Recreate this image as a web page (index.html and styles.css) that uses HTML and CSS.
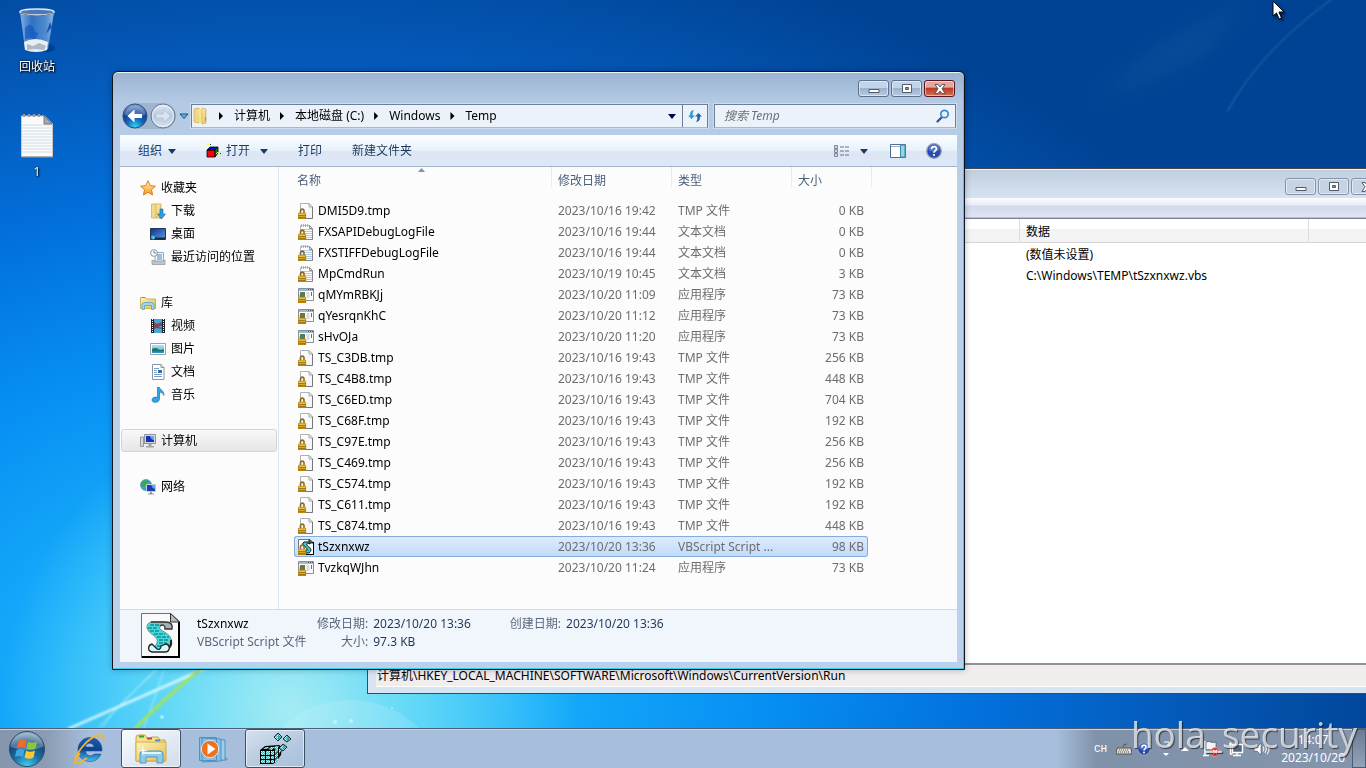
FILE: index.html
```html
<!DOCTYPE html>
<html lang="zh-CN">
<head>
<meta charset="utf-8">
<title>Temp</title>
<link rel="stylesheet" href="styles.css">
</head>
<body>
<svg class="defs" aria-hidden="true">
  <defs>
    <linearGradient id="g-fold" x1="0" y1="0" x2="1" y2="1"><stop offset="0" stop-color="#fdf3b8"/><stop offset="1" stop-color="#e3bd55"/></linearGradient>
    <linearGradient id="g-lock" x1="0" y1="0" x2="0" y2="1"><stop offset="0" stop-color="#f3cf52"/><stop offset="1" stop-color="#c08c0c"/></linearGradient>
    <linearGradient id="g-page" x1="0" y1="0" x2="1" y2="1"><stop offset="0" stop-color="#ffffff"/><stop offset="1" stop-color="#f0f2f4"/></linearGradient>
    <linearGradient id="g-blue" x1="0" y1="0" x2="1" y2="1"><stop offset="0" stop-color="#0c2f8c"/><stop offset="1" stop-color="#5aa0ea"/></linearGradient>
    <linearGradient id="g-sky" x1="0" y1="0" x2="0" y2="1"><stop offset="0" stop-color="#b9e2f8"/><stop offset="1" stop-color="#3d9cd8"/></linearGradient>
    <radialGradient id="g-back" cx=".5" cy=".95" r=".9"><stop offset="0" stop-color="#35d5f6"/><stop offset=".4" stop-color="#1566b8"/><stop offset=".7" stop-color="#123f94"/><stop offset="1" stop-color="#7c9fd4"/></radialGradient>
    <linearGradient id="g-fwd" x1="0" y1="0" x2="0" y2="1"><stop offset="0" stop-color="#dfe8f3"/><stop offset=".5" stop-color="#b6c8de"/><stop offset="1" stop-color="#d6e3f2"/></linearGradient>
    <radialGradient id="g-orb" cx=".5" cy="1" r="1"><stop offset="0" stop-color="#3fd3f5"/><stop offset=".4" stop-color="#1b6fa5"/><stop offset=".7" stop-color="#174a78"/><stop offset="1" stop-color="#9ab9d2"/></radialGradient>
    <linearGradient id="g-ie" x1="0" y1="0" x2="0" y2="1"><stop offset="0" stop-color="#1d5fb2"/><stop offset=".5" stop-color="#0d4391"/><stop offset="1" stop-color="#45c2f2"/></linearGradient>
    <linearGradient id="g-star" x1="0" y1="0" x2="0" y2="1"><stop offset="0" stop-color="#fff3a8"/><stop offset="1" stop-color="#f59a1c"/></linearGradient>
    <linearGradient id="g-bin" x1="0" y1="0" x2="1" y2="0"><stop offset="0" stop-color="#b6d3f0" stop-opacity=".75"/><stop offset=".35" stop-color="#4d8bd6" stop-opacity=".6"/><stop offset=".75" stop-color="#79aae2" stop-opacity=".65"/><stop offset="1" stop-color="#c4dcf5" stop-opacity=".75"/></linearGradient>
    <pattern id="p-dots" width="2" height="2" patternUnits="userSpaceOnUse"><rect width="2" height="2" fill="#16c3c6"/><rect width="1" height="1" fill="#d8ffff"/><rect x="1" y="1" width="1" height="1" fill="#8eeeee"/></pattern>
  </defs>
  <symbol id="lock" viewBox="0 0 16 16">
    <path d="M2.500 10V7.500a1.800 1.800 0 0 1 3.500 0V10" fill="none" stroke="#8c6a1c" stroke-width="1.600"/>
    <path d="M0 10h8v6H0z" fill="url(#g-lock)"/><path d="M0 12.500h8M0 14.500h8" stroke="#9a6c08" stroke-width=".8"/><path d="M.3 10.300h7.400v5.400H.3z" fill="none" stroke="#a87808" stroke-width=".6"/>
  </symbol>
  <symbol id="f-tmp" viewBox="0 0 16 16">
    <path d="M2.500 .5h8.500l3.500 3.500v11.500h-12z" fill="url(#g-page)" stroke="#b0b0b0"/><path d="M11 .5V4h3.500z" fill="#fff" stroke="#a6a6a6"/><path d="M14.500 4v11.500H8" fill="none" stroke="#777"/><use href="#lock"/>
  </symbol>
  <symbol id="f-txt" viewBox="0 0 16 16">
    <path d="M2.500 1.500h9l3 3v11h-12z" fill="#fff" stroke="#b6bcc2"/><path d="M3 5.500h11M3 7.500h11M3 9.500h11M3 11.500h11M3 13.500h11" stroke="#b3cbe2"/><path d="M3.500 0v3M5.500 0v3M7.500 0v3M9.500 0v3" stroke="#a3a3a3" stroke-width=".8"/><path d="M11.500 1.500v3h3z" fill="#eee" stroke="#8e8e8e"/><path d="M14.500 5v10.500H8" fill="none" stroke="#858585"/><use href="#lock"/>
  </symbol>
  <symbol id="f-exe" viewBox="0 0 16 16">
    <path d="M.5 1.500h15v12H.5z" fill="#fdfdfd" stroke="#84919d"/><path d="M1 2h14v2H1z" fill="#a9b6c3"/><path d="M10 2.500h1M12 2.500h1M14 2.500h1" stroke="#4a5663"/><path d="M2 5h5v5H2z" fill="#2f8b91"/><path d="M8.500 6h3M8.500 8h3M8.500 10h3" stroke="#b5bac0"/><path d="M13.500 5v4" stroke="#3c8a68"/><use href="#lock"/>
  </symbol>
  <symbol id="scroll" viewBox="0 0 39 45">
    <path d="M.5 .5h29l9 8v36H.5z" fill="#fafafa" stroke="#6f6f6f"/><path d="M38 9v35H1" fill="none" stroke="#000" stroke-width="2"/><path d="M29.500 .5v8.500h9z" fill="#b9b9b9" stroke="#333"/>
    <path d="M10 9c-4 1-5 5-3 8 2 4 8 6 9 9 1 4-1 7-5 9l-2 3h14c5-2 8-7 7-12-1-5-8-7-11-10-1-3 1-5 4-7z" fill="#48dada" stroke="#5b8f92"/>
    <path d="M10 9h15c5 0 7 3 6 7h-7c0-4-2-5-5-3" fill="#a3b1b1" stroke="#333" stroke-width="1.300"/><path d="M9 12h9M7 15h9M9 18h9M13 21h11M16 24h12M18 27h9M18 30h8M16 33h8" stroke="#0a9397" stroke-width="1.300" stroke-dasharray="4 1"/><path d="M30 27c1 5-2 9-6 11" fill="none" stroke="#222" stroke-width="2"/><path d="M11 31c-4 1-5 7 0 8h13c5 0 6-7 1-8l-5 2c0 3-2 4-4 3z" fill="#d9fafa" stroke="#222" stroke-width="1.300"/>
  </symbol>
  <symbol id="f-vbs" viewBox="0 0 16 16">
    <path d="M.5 .5h11l4 3v12H.5z" fill="#fff" stroke="#777"/><path d="M15.500 3v12.500H7" fill="none" stroke="#000"/><path d="M11 .5V4h4z" fill="#999" stroke="#222"/><path d="M6 3C2 6 9 8 9 10s-2 3-2 4h4c3-2 2-5 0-6S8 5 10 4l2 1V3z" fill="#35cfd0" stroke="#111"/><path d="M5 5l6 7M4 4l4 5" stroke="#0c8086" stroke-dasharray="1 1"/><use href="#lock"/>
  </symbol>
  <symbol id="cube" viewBox="0 0 32 32">
    <path d="M1 17l5-4 14-1 3 2-1 8-5 7-3 2H1z" fill="#000"/>
    <path d="M2 18h4v4H2zM7 18h4v4H7zM2 23h4v3H2zM7 23h4v3H7zM12 23h3v3h-3zM2 27h4v3H2zM7 27h4v3H7zM12 27h3v3h-3zM12 18h3v4h-3zM16 22l3-3v4l-3 3zM16 27l3-3v3l-3 3zM16 17l3-3v4l-3 3zM4 16l3-2h3l-2 2zM9 16l3-2h3l-2 3zM14 15l3-2h3l-3 3zM20 16l2-2v4l-2 3z" fill="url(#p-dots)"/>
    <path d="M19 0l4 4-4 4-4-4zM28 2l4 4-4 3-4-3zM24 11l4 3-4 4-4-3z" fill="url(#p-dots)" stroke="#000" stroke-width=".8"/><path d="M19 1v6l3-3zM28 3v5l3-2zM24 12v5l3-3z" fill="#078488" opacity=".55"/>
  </symbol>
  <symbol id="q" viewBox="0 0 16 16"><circle cx="8" cy="8" r="7.300" fill="#254cb2" stroke="#9a9fab" stroke-width="1.300"/><path d="M2.500 7a5.500 5.500 0 0 1 11 0c-3 2-8 2-11 0z" fill="#7191db" opacity=".6"/><path d="M5.500 6.200c0-3.500 5-3.300 5-.4C10.500 7.500 8 7.600 8 9.700" fill="none" stroke="#fff" stroke-width="1.700"/><circle cx="8" cy="12" r="1.100" fill="#fff"/></symbol>
  <symbol id="down" viewBox="0 0 8 5"><path d="M0 0h8L4 5z"/></symbol>
  <symbol id="w-min" viewBox="0 0 12 10"><path d="M1 5.500h10v3H1z" fill="#fff" stroke="#535b69"/></symbol>
  <symbol id="w-max" viewBox="0 0 12 10"><path d="M1.500 .5h9v8h-9z" fill="#fff" stroke="#535b69"/><path d="M4.500 3.500h3v2h-3z" fill="#8696a9" stroke="#535b69"/></symbol>
  <symbol id="w-x" viewBox="0 0 12 10"><path d="M1 .5h3L6 3 8 .5h3L8 4.800 11 9.500H8L6 7 4 9.500H1l3-4.700z" fill="#fff" stroke="#535b69"/></symbol>
</svg>

<div class="screen">
<main class="desktop">
  <svg class="rays" viewBox="0 0 1366 728" preserveAspectRatio="none" aria-hidden="true">
    <defs><filter id="soft"><feGaussianBlur stdDeviation="1"/></filter><filter id="haze" x="-50%" y="-50%" width="200%" height="200%"><feGaussianBlur stdDeviation="12"/></filter></defs>
    <g fill="none" filter="url(#soft)">
      <path d="M68 729q50-22 100-44 30-13 60-28" stroke="#eaffff" stroke-width="3" opacity=".8"/>
      <path d="M98 728q30-30 70-72M102 728q20-30 56-58M144 728q10-28 20-58" stroke="#d8fbff" stroke-width="1" opacity=".6"/>
      <path d="M132 732q30-32 72-66" stroke="#a4e256" stroke-width="3"/>
      <path d="M1342-8q-80 55-115 120" stroke="#7bb1d6" stroke-width="1" opacity=".45"/>
    </g>
    <path d="M1260-10L1150 50 1080 110 1200 60z" fill="#2b79a8" opacity=".2" filter="url(#haze)"/>
    <ellipse cx="350" cy="790" rx="95" ry="90" fill="#dffaff" opacity=".16"/>
    <g fill="#e6ffff" opacity=".5"><circle cx="162" cy="717" r="2"/><circle cx="335" cy="722" r="2"/><circle cx="351" cy="721" r="2"/><circle cx="392" cy="708" r="1"/></g>
  </svg>

  <div class="shortcuts">
    <div class="shortcut">
      <svg width="38" height="46" viewBox="0 0 38 46" aria-hidden="true"><ellipse cx="29" cy="40" rx="8" ry="4" fill="#022a72" opacity=".5"/><path d="M2 4l5 37c5 4 18 4 23 0l6-37z" fill="url(#g-bin)"/><path d="M7 20q5-7 9 0 0 4 4 5l-3 7q-6-4-10 0z" fill="#1359c0" opacity=".7"/><path d="M34 19l-6 7 4-12" fill="#1b57b4"/><path d="M6 34q11-6 24 0l-1 8q-11 4-22 0z" fill="#e8eef2"/><path d="M9 36l6 2 6-3 7 3-2 4-9-1-8 1z" fill="#aeb9c4"/><ellipse cx="19" cy="4" rx="17" ry="3" fill="#4c79b8" stroke="#e3e9ef" stroke-width="1.500"/><path d="M2 5q17 6 34 0" fill="none" stroke="#68727d"/></svg>
      <span>回收站</span>
    </div>
    <div class="shortcut">
      <svg width="34" height="46" viewBox="0 0 34 46" aria-hidden="true"><path d="M1.500 3h23l8 8v32.500h-31z" fill="#fbfbfb" stroke="#c9c9c9"/><path d="M2 12h30M2 15h30M2 18h30M2 21h30M2 24h30M2 27h30M2 30h30M2 33h30M2 36h30M2 39h30" stroke="#c7d8e5" stroke-width=".9"/><path d="M24 3v8h8z" fill="#aaa" stroke="#666" stroke-width=".8"/><path d="M2 44h31" stroke="#999"/><path d="M3 2.500h20" stroke="#999" stroke-width="3" stroke-dasharray="2 3"/></svg>
      <span>1</span>
    </div>
  </div>

  <section class="window registry" aria-label="注册表编辑器">
    <div class="controls">
      <button aria-label="最小化"><svg width="12" height="10"><use href="#w-min"/></svg></button>
      <button aria-label="最大化"><svg width="12" height="10"><use href="#w-max"/></svg></button>
      <button aria-label="关闭"><svg width="12" height="10"><use href="#w-x"/></svg></button>
    </div>
    <div class="reg-menu"></div>
    <div class="reg-body">
      <table class="reg-table">
        <colgroup><col class="c-space"><col class="c-data"><col></colgroup>
        <thead><tr><th></th><th>数据</th><th></th></tr></thead>
        <tbody><tr><td></td><td>(数值未设置)</td><td></td></tr><tr><td></td><td>C:\Windows\TEMP\tSzxnxwz.vbs</td><td></td></tr></tbody>
      </table>
    </div>
    <div class="reg-status">计算机\HKEY_LOCAL_MACHINE\SOFTWARE\Microsoft\Windows\CurrentVersion\Run</div>
  </section>

  <section class="window explorer" aria-label="Temp">
    <div class="controls">
      <button aria-label="最小化"><svg width="12" height="10"><use href="#w-min"/></svg></button>
      <button aria-label="最大化"><svg width="12" height="10"><use href="#w-max"/></svg></button>
      <button class="close" aria-label="关闭"><svg width="12" height="10"><use href="#w-x"/></svg></button>
    </div>
    <div class="nav-row">
      <div class="history">
        <button aria-label="返回"><svg width="26" height="26" viewBox="0 0 26 26"><circle cx="13" cy="13" r="12" fill="url(#g-back)" stroke="#34507c"/><path d="M3 12a10 9 0 0 1 20 0q-10 3-20 0z" fill="#fff" opacity=".25"/><path d="M5.500 13l7-6.500v4.500h7.500v4h-7.500v4.500z" fill="#fff"/></svg></button>
        <button aria-label="前进"><svg width="26" height="26" viewBox="0 0 26 26"><circle cx="13" cy="13" r="12" fill="url(#g-fwd)" stroke="#68788e"/><circle cx="13" cy="13" r="10.500" fill="none" stroke="#f3f8fd" opacity=".8"/><path d="M20.500 13l-7-6.500v4.500H6v4h7.500v4.500z" fill="#d9e4f0" stroke="#b3c3d6" stroke-width=".7"/></svg></button>
      </div>
      <button class="recent" aria-label="最近的页面"><svg width="10" height="7" viewBox="0 0 10 7"><path d="M1 1h8L5 5.500z" fill="#58b0e4" stroke="#1d4c80"/></svg></button>
      <div class="address">
        <svg width="16" height="18" viewBox="0 0 16 18" aria-hidden="true"><path d="M1 2l5-1v15l-5-1z" fill="#f0d886" stroke="#c7a445" stroke-width=".6"/><path d="M5 2h6v14H6z" fill="#f7e493"/><path d="M9 1l4 1v14l-4 1z" fill="url(#g-fold)" stroke="#c7a445" stroke-width=".6"/><path d="M12.500 10v4" stroke="#5cb0dd" stroke-width="1.200"/></svg>
        <i class="sep"></i><button>计算机</button><i class="sep"></i><button>本地磁盘 (C:)</button><i class="sep"></i><button>Windows</button><i class="sep"></i><button>Temp</button>
        <button class="drop" aria-label="历史"><svg width="8" height="5" fill="#000058"><use href="#down"/></svg></button>
        <button class="refresh" aria-label="刷新"><svg width="16" height="16" viewBox="0 0 16 16"><path d="M1 7.500h2C3 4 4 2.500 7 2 5.800 3.500 5.500 5 5.700 7.500H8L4.500 11z" fill="#2f9ad6"/><path d="M15 8.500h-2c0 3.500-1 5-4 5.500 1.200-1.500 1.500-3 1.300-5.500H8L11.500 5z" fill="#1f62b4"/></svg></button>
      </div>
      <label class="search"><input type="text" placeholder="搜索 Temp" aria-label="搜索 Temp"><svg width="14" height="14" viewBox="0 0 14 14"><path d="M1.500 12.500L6 8" stroke="#28549f" stroke-width="2.200" stroke-linecap="round"/><circle cx="8.500" cy="5" r="3.700" fill="#e3f3fc" stroke="#3c86cb" stroke-width="1.700"/></svg></label>
    </div>
    <div class="client">
      <div class="toolbar">
        <button class="organize">组织<svg width="8" height="5"><use href="#down"/></svg></button>
        <button class="open"><svg width="16" height="16" viewBox="0 0 16 16"><path d="M1 7h8v7H1z" fill="#f00" stroke="#000" stroke-width=".8"/><path d="M1 7l3-3h8L9 7z" fill="#00f" stroke="#000" stroke-width=".8"/><path d="M9 7l3-3v6l-3 4z" fill="#080" stroke="#000" stroke-width=".8"/><path d="M1 2l1-2 1 2M10 11l2-2 1 2" fill="none" stroke="#ff0"/><path d="M4 1h1v1H4zM14 10h1v1h-1z"/></svg>打开<svg class="arrow" width="8" height="5"><use href="#down"/></svg></button>
        <button class="print">打印</button>
        <button>新建文件夹</button>
        <div class="view-tools">
          <button aria-label="更改视图"><svg width="16" height="13" viewBox="0 0 16 13"><g fill="#fff" stroke="#7a8998"><path d="M.5 .5h3v3h-3zM.5 4.500h3v3h-3zM.5 8.500h3v3h-3z"/></g><path d="M1.500 2h1M1.500 6h1M1.500 10h1" stroke="#9b4a42"/><path d="M6 2h4M11 2h4M6 6h4M11 6h4M6 10h4M11 10h4" stroke="#63738a"/></svg></button>
          <button aria-label="更多选项"><svg width="8" height="5"><use href="#down"/></svg></button>
          <button class="pane" aria-label="预览窗格"><svg width="16" height="14" viewBox="0 0 16 14"><path d="M.5 .5h15v13H.5z" fill="#fff" stroke="#4f6c91"/><path d="M1 2.500h14" stroke="#9bb0c8"/><path d="M10.500 1h4.500v12h-4.500z" fill="#8fd6e8" stroke="#3e8ba6"/></svg></button>
          <button aria-label="帮助"><svg width="16" height="16"><use href="#q"/></svg></button>
        </div>
      </div>
      <div class="panes">
        <nav class="tree">
          <a href="#fav"><svg width="16" height="16" viewBox="0 0 16 16"><path d="M8 .7l2.200 4.900 5.200.6-3.900 3.500 1.100 5.300L8 12.300 3.400 15l1.100-5.300L.6 6.200l5.200-.6z" fill="url(#g-star)" stroke="#d9711a" stroke-width=".9"/></svg>收藏夹</a>
          <a class="sub" href="#dl"><svg width="16" height="16" viewBox="0 0 16 16"><path d="M1.500 1h6v14h-6z" fill="#f2da8b" stroke="#c9a548" stroke-width=".7"/><path d="M6 1h5v15L6 14z" fill="url(#g-fold)" stroke="#c9a548" stroke-width=".7"/><path d="M10 6h3v5h2.500L11.500 16l-4-5H10z" fill="#2c9be6" stroke="#1569b0" stroke-width=".6"/></svg>下载</a>
          <a class="sub" href="#dt"><svg width="16" height="16" viewBox="0 0 16 16"><path d="M.5 2.500h15v11H.5z" fill="url(#g-blue)" stroke="#25364e"/><path d="M1 11.500h14v2H1z" fill="#1b2a44"/><circle cx="3" cy="11.500" r="2" fill="#43b0d8"/><path d="M3 11h1v2H3z" fill="#f3b13b"/></svg>桌面</a>
          <a class="sub" href="#rc"><svg width="16" height="16" viewBox="0 0 16 16"><path d="M5 3.500h8.500v9H5z" fill="#edf5fb" stroke="#9aa8b5"/><path d="M7 6h5M7 8h5M7 10h5" stroke="#3e8ccc"/><path d="M2 11l2 1h9l2-1v4.500H2z" fill="#bfc5ca" stroke="#8d959c" stroke-width=".7"/><circle cx="4" cy="4" r="3.400" fill="#f8f8f8" stroke="#8b97a2"/><path d="M4 2v2h2" fill="none" stroke="#666" stroke-width=".8"/></svg>最近访问的位置</a>
          <a class="group" href="#lib"><svg width="16" height="16" viewBox="0 0 16 16"><path d="M.5 2.500h5l1 1.500h9v9.500H.5z" fill="url(#g-fold)" stroke="#c5a23f" stroke-width=".8"/><path d="M2 2.500h3" stroke="#5fa83d"/><path d="M2 14.500V9.800Q2 7.500 4.500 7.500h7Q14 7.500 14 9.800v4.700h-2.500V10.500h-7v4z" fill="#9ed8ef" stroke="#4a98c0" stroke-width=".7"/></svg>库</a>
          <a class="sub" href="#v"><svg width="16" height="16" viewBox="0 0 16 16"><path d="M1 1h14v14H1z" fill="#1a2330"/><path d="M4 1h8v14H4z" fill="#4aa5d8"/><path d="M4 4l3 2 5-2v4L8 8l4 2v1l-5-1-3 1z" fill="#84484a"/><path d="M2.500 1v14M13.500 1v14" stroke="#fff" stroke-dasharray="1 1"/></svg>视频</a>
          <a class="sub" href="#p"><svg width="16" height="16" viewBox="0 0 16 16"><path d="M.5 2.500h15v11H.5z" fill="#fff" stroke="#9aa2aa"/><path d="M2 4h12v8H2z" fill="url(#g-sky)"/><path d="M2 8q4-2 6 0t6 0v4H2z" fill="#1d786c"/><path d="M2 10.500h12V12H2z" fill="#2d96c8"/></svg>图片</a>
          <a class="sub" href="#d"><svg width="16" height="16" viewBox="0 0 16 16"><path d="M2.500 .5h8.500l3 3v12H2.500z" fill="#fff" stroke="#8d959e"/><path d="M11 .5v3h3" fill="#ddd" stroke="#8d959e"/><path d="M4 4.500h5M4 6.500h3M4 8.500h3M4 10.500h8M4 12.500h8" stroke="#7fa0c5"/><path d="M8 6h4v3H8z" fill="#2f6bbb"/></svg>文档</a>
          <a class="sub" href="#m"><svg width="16" height="16" viewBox="0 0 16 16"><path d="M7.500 0h1.500c1 3 5 3 5 8.500-1-2.500-2-3-4.500-3.500V12c0 4-7.500 4.500-7.500 1 0-2.500 3-3.500 5.500-2.500z" fill="#32a3e2" stroke="#1d76b8" stroke-width=".7"/></svg>音乐</a>
          <a class="group on" href="#pc"><svg width="16" height="16" viewBox="0 0 16 16"><path d="M.5 4h3v9.500h-3z" fill="#d6dadd" stroke="#7f868e" stroke-width=".8"/><path d="M4.500 1.500h11v9h-11z" fill="#d5d9dc" stroke="#8b9299"/><path d="M6 3h8v6H6z" fill="#1431b1"/><path d="M10 3h4v4q-3 0-4-4z" fill="#6f9df0"/><path d="M8.500 11h3v2h-3zM6 13h8v1.500H6z" fill="#9ea5ac"/></svg>计算机</a>
          <a class="group" href="#net"><svg width="16" height="16" viewBox="0 0 16 16"><circle cx="6" cy="6" r="5.500" fill="#3fa3dc" stroke="#2a78b3" stroke-width=".6"/><path d="M2 3q4-3 7-1L6 5 4 8 1 7zM5 9l3 1-2 1.500z" fill="#3aaa3a"/><path d="M6.500 5.500h9v7h-9z" fill="#1a3fae" stroke="#c4ccd4"/><path d="M11 6h4v4q-3-1-4-4z" fill="#6f9df0"/><path d="M10 13h2v1.500h2v1H8v-1h2z" fill="#8d959c"/></svg>网络</a>
        </nav>
        <div class="listing">
          <svg class="sort" width="7" height="4" viewBox="0 0 7 4"><path d="M0 4l3.500-4L7 4z" fill="#6a9cb8"/></svg>
          <table class="files">
            <colgroup><col class="c-name"><col class="c-date"><col class="c-type"><col class="c-size"><col class="c-end"></colgroup>
            <thead><tr><th>名称</th><th>修改日期</th><th>类型</th><th colspan="2">大小</th></tr></thead>
            <tbody>
              <tr><td><svg><use href="#f-tmp"/></svg>DMI5D9.tmp</td><td>2023/10/16 19:42</td><td>TMP 文件</td><td>0 KB</td></tr>
              <tr><td><svg><use href="#f-txt"/></svg>FXSAPIDebugLogFile</td><td>2023/10/16 19:44</td><td>文本文档</td><td>0 KB</td></tr>
              <tr><td><svg><use href="#f-txt"/></svg>FXSTIFFDebugLogFile</td><td>2023/10/16 19:44</td><td>文本文档</td><td>0 KB</td></tr>
              <tr><td><svg><use href="#f-txt"/></svg>MpCmdRun</td><td>2023/10/19 10:45</td><td>文本文档</td><td>3 KB</td></tr>
              <tr><td><svg><use href="#f-exe"/></svg>qMYmRBKJj</td><td>2023/10/20 11:09</td><td>应用程序</td><td>73 KB</td></tr>
              <tr><td><svg><use href="#f-exe"/></svg>qYesrqnKhC</td><td>2023/10/20 11:12</td><td>应用程序</td><td>73 KB</td></tr>
              <tr><td><svg><use href="#f-exe"/></svg>sHvOJa</td><td>2023/10/20 11:20</td><td>应用程序</td><td>73 KB</td></tr>
              <tr><td><svg><use href="#f-tmp"/></svg>TS_C3DB.tmp</td><td>2023/10/16 19:43</td><td>TMP 文件</td><td>256 KB</td></tr>
              <tr><td><svg><use href="#f-tmp"/></svg>TS_C4B8.tmp</td><td>2023/10/16 19:43</td><td>TMP 文件</td><td>448 KB</td></tr>
              <tr><td><svg><use href="#f-tmp"/></svg>TS_C6ED.tmp</td><td>2023/10/16 19:43</td><td>TMP 文件</td><td>704 KB</td></tr>
              <tr><td><svg><use href="#f-tmp"/></svg>TS_C68F.tmp</td><td>2023/10/16 19:43</td><td>TMP 文件</td><td>192 KB</td></tr>
              <tr><td><svg><use href="#f-tmp"/></svg>TS_C97E.tmp</td><td>2023/10/16 19:43</td><td>TMP 文件</td><td>256 KB</td></tr>
              <tr><td><svg><use href="#f-tmp"/></svg>TS_C469.tmp</td><td>2023/10/16 19:43</td><td>TMP 文件</td><td>256 KB</td></tr>
              <tr><td><svg><use href="#f-tmp"/></svg>TS_C574.tmp</td><td>2023/10/16 19:43</td><td>TMP 文件</td><td>192 KB</td></tr>
              <tr><td><svg><use href="#f-tmp"/></svg>TS_C611.tmp</td><td>2023/10/16 19:43</td><td>TMP 文件</td><td>192 KB</td></tr>
              <tr><td><svg><use href="#f-tmp"/></svg>TS_C874.tmp</td><td>2023/10/16 19:43</td><td>TMP 文件</td><td>448 KB</td></tr>
              <tr class="selected"><td><svg><use href="#f-vbs"/></svg>tSzxnxwz</td><td>2023/10/20 13:36</td><td>VBScript Script ...</td><td>98 KB</td></tr>
              <tr><td><svg><use href="#f-exe"/></svg>TvzkqWJhn</td><td>2023/10/20 11:24</td><td>应用程序</td><td>73 KB</td></tr>
            </tbody>
          </table>
        </div>
      </div>
      <footer class="details">
        <svg width="39" height="45" aria-hidden="true"><use href="#scroll"/></svg>
        <div class="what"><strong>tSzxnxwz</strong><span>VBScript Script 文件</span></div>
        <dl class="props"><dt>修改日期:</dt><dd>2023/10/20 13:36</dd><dt>大小:</dt><dd>97.3 KB</dd></dl>
        <dl class="props"><dt>创建日期:</dt><dd>2023/10/20 13:36</dd></dl>
      </footer>
    </div>
  </section>

  <svg class="cursor" width="14" height="21" viewBox="0 0 14 21" aria-hidden="true"><path d="M1 1v15l3.500-3 2.500 6 2.500-1L7 12h5z" fill="#fff" stroke="#000"/></svg>
</main>

<footer class="taskbar">
  <button class="start" aria-label="开始"><svg width="38" height="38" viewBox="0 0 38 38"><circle cx="19" cy="19" r="17.500" fill="url(#g-orb)" stroke="#2b4d70"/><path d="M3 17a16 14 0 0 1 32 0q-16 6-32 0z" fill="#fff" opacity=".25"/><path d="M10.500 11q4-2.500 8 0l-1.500 7q-4-2-8 0z" fill="#ee6a2e"/><path d="M20 11.500q4 2.500 9 0l-1.500 7q-4 2.500-9 0z" fill="#8cc63e"/><path d="M8.500 20q4-2 8 0l-1.500 7q-4-2-8 0z" fill="#40a6e2"/><path d="M18 20.500q4 2.500 9 0l-1.500 7q-4 2.500-9 0z" fill="#fdc92f"/></svg></button>
  <button class="task" aria-label="Internet Explorer"><svg width="32" height="32" viewBox="0 0 32 32"><path d="M28 21c-2 5-6 7.500-11 7.500C10.500 28.500 5 24 5 17S10 4.500 17 4.500 29.500 10 29 18H12.500c.3 5.500 6.500 6 8.500 3zM12.500 14H21c-.5-5-8-5-8.500 0z" fill="url(#g-ie)" fill-rule="evenodd" stroke="#123f7c" stroke-width=".5"/><path d="M7 20Q0 30 3 30q4 0 11-5M3 30C-2 26 15 2 28 2q4 1 2 6" fill="none" stroke="#f4b52c" stroke-width="1.800"/></svg></button>
  <button class="task active" aria-label="Windows 资源管理器"><svg width="34" height="32" viewBox="0 0 34 32"><path d="M2 5q0-3 2-3h7l2 3h3l2-1h6l2 3h5v21H2z" fill="#f6e08e" stroke="#c9a23f"/><path d="M5 3.500h5" stroke="#31a13c" stroke-width="2"/><path d="M13 5.500h5" stroke="#c6423a" stroke-width="2"/><path d="M21 7.500h5" stroke="#3c8fd1" stroke-width="2"/><path d="M2 9h30v19H2z" fill="url(#g-fold)" stroke="#d2ae4d"/><path d="M6 30V21q0-3 3-3h17q3 0 3 3v9h-6v-6H12v6z" fill="#8fcbe9" stroke="#4d9bc3"/><path d="M8 20h19" stroke="#dff6ff" stroke-width="2"/><path d="M9 12l.7 5 5 .7-5 .8-.7 5-.7-5-4-.8 4-.7z" fill="#fff"/></svg></button>
  <button class="task" aria-label="Windows Media Player"><svg width="30" height="30" viewBox="0 0 30 30"><ellipse cx="24" cy="25" rx="6" ry="2" fill="#5a6b80" opacity=".4"/><path d="M7 5l20 1v20L7 27z" fill="#9fcdeb" stroke="#4f92bf"/><path d="M4 4l19 1v22L4 28zM1.500 3.500h17v23h-17z" fill="#83bfe4" stroke="#4f92bf"/><circle cx="12" cy="15" r="8.700" fill="#f26f1d" stroke="#d8e9f5"/><path d="M9.500 9.500v11l8-5.500z" fill="#fff"/></svg></button>
  <button class="task running" aria-label="注册表编辑器"><svg width="32" height="32"><use href="#cube"/></svg></button>
  <div class="tray">
    <span class="lang">CH</span>
    <svg class="keys" width="16" height="13" viewBox="0 0 16 13"><path d="M1 6h14l1 6H0z" fill="#e0ddd2" stroke="#56544d"/><path d="M3 8h10M2 10h12" stroke="#555" stroke-dasharray="1 1"/><path d="M7 5q0-3 4-3" fill="none" stroke="#56544d"/></svg>
    <svg width="14" height="14"><use href="#q"/></svg>
    <svg class="langbar" width="8" height="16" viewBox="0 0 8 16"><path d="M2 1h5v3H5" fill="none" stroke="#fff"/><path d="M1 12h6l-3 3z" fill="#fff"/></svg>
    <svg class="more" width="10" height="6" viewBox="0 0 10 6"><path d="M1 5l4-4 4 4z" fill="#fff"/></svg>
    <svg width="17" height="17" viewBox="0 0 17 17"><path d="M2 1v14M0 15.500h6" stroke="#fff" stroke-width="1.500"/><path d="M3 2q3-1 5 0t5 0v8q-3 1-5 0t-5 0z" fill="#f2f5f8" stroke="#35404e" stroke-width=".6"/><circle cx="12" cy="12" r="4.500" fill="#dc2f2f" stroke="#f7b0b0" stroke-width=".7"/><path d="M10 10l4 4M14 10l-4 4" stroke="#fff" stroke-width="1.500"/></svg>
    <svg width="15" height="16" viewBox="0 0 15 16"><path d="M3.500 3.500h10v8h-10z" fill="#56697d" stroke="#fff" stroke-width="1.400"/><path d="M8 12v2M4 14.500h8M1.500 1v12h2M0 3h3" stroke="#fff" stroke-width="1.400" fill="none"/></svg>
    <svg width="17" height="16" viewBox="0 0 17 16"><path d="M1 6h3l4-4v12l-4-4H1z" fill="#fff" stroke="#35404e" stroke-width=".5"/><path d="M10 5.500q2 2.500 0 5M12 4q3 4 0 8M14 2.500q4 5.500 0 11" fill="none" stroke="#fff"/></svg>
    <time class="clock">14:07<br>2023/10/20</time>
    <button class="peek" aria-label="显示桌面"></button>
  </div>
</footer>
<div class="watermark">hola_security</div>
</div>
</body>
</html>
```
FILE: styles.css
```css
* { box-sizing: border-box; }
html, body { height: 100%; }
body {
  margin: 0;
  overflow: hidden;
  font: 12px/16px "Noto Sans", "Noto Sans CJK SC", sans-serif;
  color: #000;
}
button {
  margin: 0;
  padding: 0;
  border: 0;
  background: none;
  font: inherit;
  color: inherit;
}
svg { display: block; flex: none; }
.defs { position: absolute; width: 0; height: 0; }

.screen {
  position: relative;
  display: flex;
  flex-direction: column;
  height: 100vh;
}

/* Desktop */
.desktop {
  position: relative;
  flex: 1;
  min-height: 0;
  overflow: hidden;
  background:
    radial-gradient(ellipse 290px 300px at 290px 710px, rgba(172, 238, 243, .95), rgba(120, 228, 246, .7) 45%, rgba(60, 205, 250, 0)),
    radial-gradient(ellipse 1120px 780px at 290px 680px, #2fc4fb 0%, #16acfb 22%, #068df2 44%, #0270dc 62%, #0459b8 80%, #004294 100%);
}
.rays { position: absolute; inset: 0; width: 100%; height: 100%; }
.shortcuts {
  position: relative;
  display: flex;
  flex-direction: column;
  gap: 38px;
  width: 74px;
  padding-top: 8px;
}
.shortcut {
  display: flex;
  flex-direction: column;
  align-items: center;
  gap: 5px;
  color: #fff;
  text-shadow: 1px 1px 2px #000, 0 0 2px #000;
}

/* Windows */
.window {
  position: absolute;
  display: flex;
  flex-direction: column;
}
.controls { display: flex; justify-content: flex-end; gap: 2px; }
.controls button {
  display: flex;
  align-items: center;
  justify-content: center;
  width: 31px;
  height: 17px;
  border: 1px solid #5c6f8c;
  border-radius: 3px;
  box-shadow: inset 0 0 0 1px rgba(255, 255, 255, .5);
  background: linear-gradient(#c2d4e8 45%, #9db3cd 50%, #b6cbe2);
}
.controls .close {
  border-color: #5a1620;
  background: linear-gradient(#e3a79b 40%, #bd3b23 50%, #d2705a);
}

.registry {
  left: 367px;
  right: -25px;
  top: 168px;
  bottom: 34px;
  padding: 0 8px 6px;
  border: 1px solid #45484e;
  background: linear-gradient(#bfcddd, #d7e4f2 30px, #d7e4f2);
  box-shadow: inset 0 1px #eff4f9;
}
.registry .controls { height: 29px; padding-top: 9px; }
.registry .controls button {
  border-color: #8593aa;
  background: #c5d3e3;
}
.reg-menu {
  height: 20px;
  background: linear-gradient(#fbfcfe, #e9edf6 7px, #d3d9ec 8px, #dfe5f5);
  border-bottom: 1px solid #b9bdca;
}
.reg-body {
  flex: 1;
  border-top: 1px solid #7f8390;
  border-bottom: 2px solid #90939a;
  background: #fff;
}
.reg-table { width: 100%; table-layout: fixed; border-spacing: 0; }
.c-space { width: 644px; }
.c-data { width: 289px; }
.reg-table th {
  height: 24px;
  padding: 2px 6px 0;
  border-right: 1px solid #dadcde;
  border-bottom: 1px solid #d5d5d5;
  background: linear-gradient(#fff 42%, #f3f4f6 44%);
  font-weight: 400;
  text-align: left;
}
.reg-table td { height: 21px; padding: 2px 6px 0; }
.reg-status {
  height: 22px;
  line-height: 22px;
  padding-left: 1px;
  border-bottom: 1px solid #fff;
  background: #f0edec;
  white-space: nowrap;
}

.explorer {
  left: 112px;
  right: 401px;
  top: 71px;
  bottom: 58px;
  padding: 0 7px 7px;
  border: 1px solid #10151c;
  border-radius: 6px 6px 0 0;
  background: linear-gradient(#9ab3d1, #b4cae4 30px, #bad0e9 120px, #b9d1ea);
  box-shadow: inset 0 1px #e8f4fc, inset -1px -1px #35d0ee, 0 0 6px rgba(0, 20, 60, .3);
}
.explorer .controls { padding: 8px 2px 0; height: 31px; }
.nav-row {
  display: flex;
  align-items: center;
  height: 32px;
  padding: 0 1px 6px 2px;
}
.history {
  display: flex;
  gap: 2px;
  border-radius: 13px;
  background: #9fb5d0;
}
.recent { width: 13px; padding-left: 3px; }
.address, .search {
  display: flex;
  align-items: center;
  height: 24px;
  border: 1px solid #6d7f95;
  border-bottom-color: #a7b9cd;
  background: #ecf2fa;
  box-shadow: 0 0 0 1px rgba(228, 240, 250, .5);
}
.address { flex: 1; margin-left: 2px; padding-left: 1px; }
.sep {
  width: 25px;
  height: 8px;
  background: #000;
  clip-path: polygon(40% 0, 56% 50%, 40% 100%);
}
.drop { margin-left: auto; padding: 8px 6px; }
.refresh {
  display: flex;
  align-items: center;
  justify-content: center;
  width: 25px;
  height: 100%;
  border-left: 1px solid #6d7f95;
}
.search { width: 242px; margin-left: 6px; padding: 0 5px 0 9px; }
.search input {
  flex: 1;
  min-width: 0;
  padding: 0;
  border: 0;
  outline: 0;
  background: none;
  font: italic 12px/16px "Noto Sans", "Noto Sans CJK SC", sans-serif;
}
.search input::placeholder { color: #6d7075; }

.client {
  flex: 1;
  min-height: 0;
  display: flex;
  flex-direction: column;
  background: #fcfcfc;
}
.toolbar {
  display: flex;
  align-items: center;
  height: 32px;
  padding: 0 15px 0 18px;
  border-top: 1px solid #f7fbfe;
  border-bottom: 1px solid #a3b4cb;
  background: linear-gradient(#fafdff, #e8f1fb 48%, #dce6f4 52%, #dde8f7);
  color: #1e395b;
}
.toolbar button { display: flex; align-items: center; }
.toolbar button svg { fill: #1e395b; }
.organize { gap: 6px; margin-right: 30px; }
.open { gap: 4px; margin-right: 30px; }
.open .arrow { margin-left: 6px; }
.print { margin-right: 30px; }
.view-tools { display: flex; align-items: center; gap: 10px; margin-left: auto; }
.pane { margin: 0 10px 0 12px; }

.panes { flex: 1; min-height: 0; display: flex; }
.tree {
  width: 159px;
  padding: 9px 1px 0;
  border-right: 1px solid #d6e5f5;
}
.tree a {
  display: flex;
  align-items: center;
  gap: 5px;
  height: 23px;
  padding-left: 18px;
  border: 1px solid transparent;
  color: #000;
  text-decoration: none;
}
.tree .sub { padding-left: 28px; }
.tree .group { margin-top: 23px; }
.tree .on {
  border-color: #d4d4d4;
  border-radius: 3px;
  background: linear-gradient(#f8f8f8, #e6e6e6);
}

.listing { position: relative; flex: 1; padding-left: 15px; }
.sort { position: absolute; left: 139px; top: 1px; }
.files { table-layout: fixed; width: 578px; border-spacing: 0; color: #6d6d6d; }
.c-name { width: 258px; }
.c-date, .c-type { width: 120px; }
.c-size { width: 76px; }
.c-end { width: 4px; }
.files th {
  height: 33px;
  padding: 6px 6px 0;
  vertical-align: top;
  text-align: left;
  font-weight: 400;
  color: #4c607a;
  background: linear-gradient(#dce8f5, #e8eff8) right top / 1px 21px no-repeat;
}
.files th:first-child { padding-left: 3px; }
.files td {
  height: 21px;
  padding: 0 6px;
  border: solid transparent;
  border-width: 1px 0;
  line-height: 18px;
  white-space: nowrap;
}
.files td:first-child {
  display: flex;
  align-items: center;
  gap: 4px;
  padding: 0 0 0 3px;
  border-left-width: 1px;
  color: #000;
}
.files td svg { width: 16px; height: 16px; }
.files td:nth-child(4) { padding-right: 3px; border-right-width: 1px; text-align: right; }
.files .selected td {
  border-color: #84acdd;
  background: linear-gradient(#dcebfc, #c1dbfc);
}
.files .selected td:first-child { border-radius: 3px 0 0 3px; }
.files .selected td:last-child { border-radius: 0 3px 3px 0; }

.details {
  display: flex;
  height: 53px;
  padding: 3px 0 0 21px;
  border-top: 1px solid #cddbec;
  background: #f1f5fc;
  color: #5a6779;
  line-height: 18px;
  white-space: nowrap;
}
.what { display: flex; flex-direction: column; width: 120px; margin-left: 17px; padding-top: 2px; }
.what strong { font-weight: 400; color: #000; }
.props {
  display: grid;
  grid-template-columns: auto auto;
  align-content: start;
  column-gap: 5px;
  margin: 0 39px 0 0;
  padding-top: 2px;
}
.props dt { text-align: right; }
.props dd { margin: 0; color: #1e395b; }

.cursor { position: absolute; left: 94%; top: 0; margin-left: -12px; filter: drop-shadow(2px 2px 1px rgba(0, 0, 0, .5)); }

/* Taskbar */
.taskbar {
  display: flex;
  align-items: stretch;
  gap: 2px;
  height: 40px;
  border-top: 1px solid #4c6078;
  background: linear-gradient(90deg, #8495ac, #8a9bb3 45px, #a7bfdc 90px, #a7bfdc calc(100% - 310px), #8092a9 calc(100% - 270px), #8394ab);
  box-shadow: inset 0 1px #c3d3e5;
}
.start { width: 57px; padding-left: 8px; }
.task {
  display: flex;
  align-items: center;
  justify-content: center;
  width: 60px;
}
.task.active, .task.running {
  border: 1px solid #3f4f63;
  border-radius: 3px;
  box-shadow: inset 0 0 0 1px rgba(255, 255, 255, .6);
  background: linear-gradient(150deg, #d5e0ee, #b4c8e0 60%, #a9bfdb);
}
.task.active { background: linear-gradient(150deg, #fafcfe, #dfe8f2 60%, #d2deec); }
.tray {
  display: flex;
  align-items: center;
  gap: 9px;
  margin-left: auto;
  color: #fff;
}
.lang { font: 11px/16px "Liberation Mono", monospace; }
.keys { margin-right: -4px; }
.langbar { margin-left: 2px; }
.more { margin: 0 4px 0 1px; }
.clock { margin-left: 2px; text-align: center; line-height: 18px; }
.peek {
  align-self: stretch;
  width: 14px;
  margin-left: -2px;
  border: 1px solid #4b5c73;
  background: linear-gradient(#6b7c93, #93a4ba);
}
.watermark {
  position: absolute;
  right: 9px;
  bottom: 8px;
  font: 400 37px/52px "Open Sans", "Noto Sans", sans-serif;
  color: rgba(236, 239, 243, .8);
  text-shadow: 1px 1px 1px rgba(0, 0, 0, .6);
  pointer-events: none;
}
```
